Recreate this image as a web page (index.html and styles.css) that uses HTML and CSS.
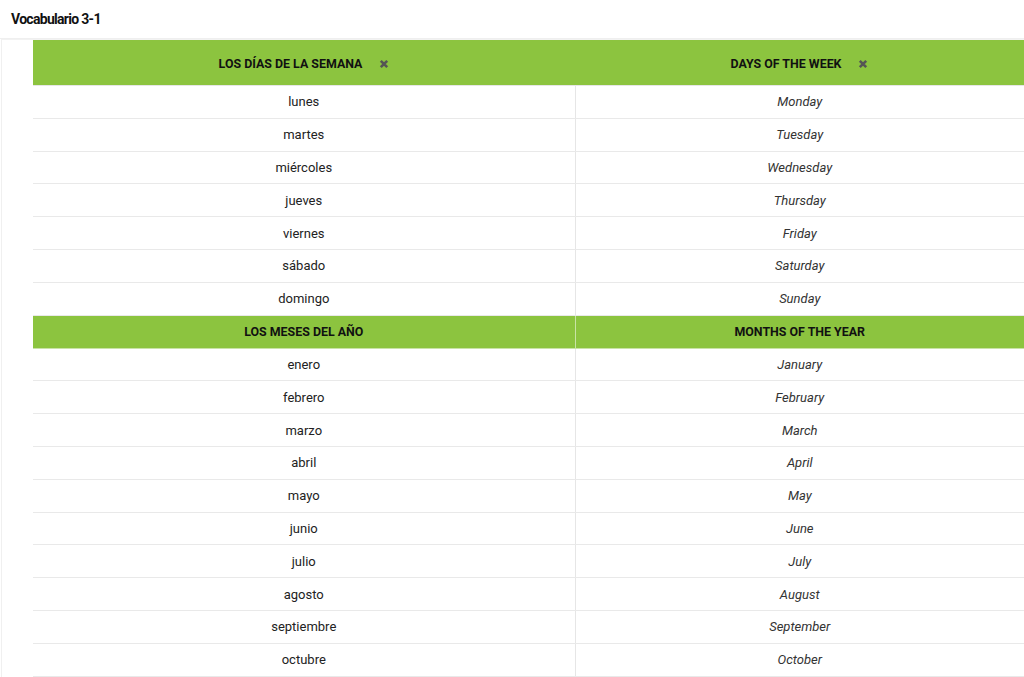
FILE: index.html
```html
<!DOCTYPE html>
<html lang="es">
<head>
<meta charset="utf-8">
<title>Vocabulario 3-1</title>
<link rel="stylesheet" href="styles.css">
</head>
<body>
<div class="title-bar"><h1 class="title">Vocabulario 3-1</h1></div>
<div class="content">
  <table class="vocab">
    <colgroup><col class="col-a"><col class="col-b"></colgroup>
    <thead>
      <tr class="head-main">
        <th><span class="th-inner">LOS DÍAS DE LA SEMANA<svg class="x" viewBox="0 0 10 10" width="10" height="10"><path d="M1.8 1.8 L8.2 8.2 M8.2 1.8 L1.8 8.2"/></svg></span></th>
        <th><span class="th-inner">DAYS OF THE WEEK<svg class="x" viewBox="0 0 10 10" width="10" height="10"><path d="M1.8 1.8 L8.2 8.2 M8.2 1.8 L1.8 8.2"/></svg></span></th>
      </tr>
    </thead>
    <tbody>
      <tr><td>lunes</td><td class="en">Monday</td></tr>
      <tr><td>martes</td><td class="en">Tuesday</td></tr>
      <tr><td>miércoles</td><td class="en">Wednesday</td></tr>
      <tr><td>jueves</td><td class="en">Thursday</td></tr>
      <tr><td>viernes</td><td class="en">Friday</td></tr>
      <tr><td>sábado</td><td class="en">Saturday</td></tr>
      <tr><td>domingo</td><td class="en">Sunday</td></tr>
      <tr class="head-sub"><th>LOS MESES DEL AÑO</th><th>MONTHS OF THE YEAR</th></tr>
      <tr><td>enero</td><td class="en">January</td></tr>
      <tr><td>febrero</td><td class="en">February</td></tr>
      <tr><td>marzo</td><td class="en">March</td></tr>
      <tr><td>abril</td><td class="en">April</td></tr>
      <tr><td>mayo</td><td class="en">May</td></tr>
      <tr><td>junio</td><td class="en">June</td></tr>
      <tr><td>julio</td><td class="en">July</td></tr>
      <tr><td>agosto</td><td class="en">August</td></tr>
      <tr><td>septiembre</td><td class="en">September</td></tr>
      <tr><td>octubre</td><td class="en">October</td></tr>
    </tbody>
  </table>
</div>
</body>
</html>
```
FILE: styles.css
```css
html, body {
  margin: 0;
  padding: 0;
  background: #fff;
  overflow: hidden;
  font-family: Roboto, "Liberation Sans", Arial, sans-serif;
  color: #222;
}
.title-bar {
  height: 38px;
  display: flex;
  align-items: center;
  padding-left: 11px;
  border-bottom: 1px solid #efefef;
}
.title {
  margin: 0;
  font-size: 14px;
  font-weight: 700;
  letter-spacing: -0.7px;
  color: #111;
}
.content {
  margin-left: 1px;
  border-left: 1px solid #f0f0f0;
  border-top: 1px solid #f2f2f2;
  padding-left: 31px;
}
.vocab {
  border-collapse: collapse;
  table-layout: fixed;
  width: 991px;
}
.col-a { width: 542px; }
.col-b { width: 449px; }
.vocab th {
  background: #8cc43f;
  color: #111;
  font-size: 12.4px;
  font-weight: 700;
  text-align: center;
  padding: 0;
}
.head-main th {
  height: 45px;
  border-bottom: 1px solid #e6e6e6;
}
.th-inner {
  display: inline-flex;
  align-items: center;
  gap: 17px;
  padding-top: 2px;
}
.x {
  stroke: #555;
  stroke-width: 2.6;
  fill: none;
  margin-top: 1px;
}
.head-sub th {
  height: 32px;
  border-bottom: 1px solid #c9e3a6;
}
.head-sub th + th {
  border-left: 1px solid #c9e3a6;
}
.vocab td {
  height: 31.8px;
  padding: 0;
  text-align: center;
  font-size: 13px;
  color: #222;
  border-bottom: 1px solid #e9e9e9;
}
.vocab td + td {
  border-left: 1px solid #e6e6e6;
}
.vocab td.en {
  font-style: italic;
  color: #333;
}
```
